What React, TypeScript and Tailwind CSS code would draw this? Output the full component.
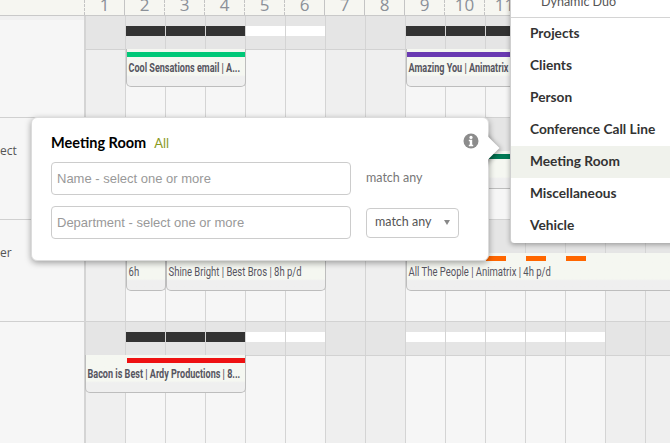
import React from "react";

const condensed = "font-['Roboto',sans-serif]";
const pt = "font-['Lato','Noto_Sans',sans-serif]";

const weekend = [0, 6, 7, 13, 14];
const days = Array.from({ length: 15 }, (_, i) => i);
const dashed = [true, false, true, true, true, true, false, false, false, true, true, true, true, true, true];

function Header() {
  return (
    <div className="flex h-[16px] border-b border-[#c9c9c9] bg-[#f6f6f1] overflow-hidden">
      <div className="w-[85px] shrink-0 border-r border-dashed border-[#c4c4c4]" />
      {days.map((d) => (
        <div
          key={d}
          className={`w-[40px] shrink-0 border-r ${dashed[d + 1] === false ? "border-solid" : "border-dashed"} border-[#c4c4c4] text-center text-[17px] leading-[10px] text-[#8b9098] font-['Open_Sans',sans-serif]`}
        >
          {d + 1}
        </div>
      ))}
    </div>
  );
}

type Bar = "k" | "w" | "p" | null;

function Card({
  left,
  width,
  label,
  bar,
  bold,
  children,
}: {
  left: number;
  width: number;
  label: string;
  bar?: string;
  bold?: boolean;
  children?: React.ReactNode;
}) {
  return (
    <div
      className="absolute top-[-1px] h-[38px] overflow-hidden rounded-b-[5px] border-b border-r border-l border-[#bdbdbd] bg-gradient-to-b from-[#f5f7f1] from-70% to-[#efefef] to-75% pt-[3px]"
      style={{ left, width }}
    >
      {bar ? <div className={`h-[5px] ${bar}`} /> : <div className="h-[5px]">{children}</div>}
      <div
        className={`mt-[4px] origin-left whitespace-nowrap pl-[2px] text-[12px] leading-[15px] text-[#55555f] ${condensed} ${bold ? "scale-x-[0.755] font-bold" : "scale-x-[0.79]"}`}
      >
        {label}
      </div>
    </div>
  );
}

function Row({
  bars,
  label,
  first,
  last,
  children,
}: {
  bars: Bar[];
  label?: string;
  first?: boolean;
  last?: boolean;
  children?: React.ReactNode;
}) {
  return (
    <div className="flex">
      <div className={`w-[84px] shrink-0 bg-[#f6f6f6] ${last ? "h-[121px]" : "h-[102px] border-b border-[#d0d0d0]"}`}>
        {first && <div className="h-[4px] bg-[#f0f0f0]" />}
        {label && (
          <div className="pt-[24px] text-[12px] leading-[18px] text-[#555] font-['Open_Sans',sans-serif]">
            {label}
          </div>
        )}
      </div>
      <div className="w-[2px] shrink-0 bg-[#d4d4d4]" />
      <div className="flex flex-col">
        <div className="flex h-[34px] border-b border-[#d2d2d2]">
          {days.map((d) => (
            <div key={d} className="h-[33px] w-[40px] shrink-0 border-r border-[#d4d4d4] bg-[#e5e5e5] pt-[10px]">
              {bars[d] === "k" && <div className="h-[10px] bg-[#333333]" />}
              {bars[d] === "w" && <div className="h-[10px] bg-white" />}
              {bars[d] === "p" && <div className="h-[10px] w-[20px] bg-[#333333]" />}
            </div>
          ))}
        </div>
        <div className={`relative flex ${last ? "h-[87px]" : "h-[68px]"}`}>
          {days.map((d) => (
            <div
              key={d}
              className={`w-[40px] shrink-0 border-r border-[#d4d4d4] ${last ? "h-[87px]" : "h-[67px]"} ${weekend.includes(d) ? "bg-[#efefef]" : "bg-[#f6f6f6]"}`}
            />
          ))}
          {!last && <div className="absolute inset-x-0 bottom-0 h-px bg-[#d2d2d2]" />}
          {children}
        </div>
      </div>
    </div>
  );
}

const n: Bar = null;

function Popover() {
  return (
    <div className="absolute left-[31px] top-[117px] h-[144px] w-[458px] rounded-[6px] border border-[#dcdcdc] bg-white shadow-[0_2px_6px_rgba(0,0,0,0.35)]">
      <div className="absolute left-full top-[12px] h-[44px] w-[24px] overflow-hidden">
        <div className="absolute -left-[15px] top-[7px] h-[22px] w-[22px] rotate-45 bg-white shadow-[2px_0_5px_rgba(0,0,0,0.35)]" />
      </div>
      <div className="relative flex flex-col pl-[19px] pt-[13px]">
        <div className="flex items-baseline gap-[8px]">
          <span className={`text-[14.5px] font-bold leading-[24px] text-black ${pt}`}>Meeting Room</span>
          <span className={`text-[13px] leading-[24px] text-[#8a9a1e] ${pt}`}>All</span>
        </div>
        <div className="mt-[7px] flex items-center">
          <div className="flex h-[33px] w-[300px] items-center rounded-[4px] border border-[#cccccc] pl-[5px] font-['Liberation_Sans',sans-serif] text-[13px] text-[#999]">
            Name - select one or more
          </div>
          <div className={`ml-[15px] text-[12.5px] text-[#777] ${pt}`}>match any</div>
        </div>
        <div className="mt-[11px] flex items-center">
          <div className="flex h-[33px] w-[300px] items-center rounded-[4px] border border-[#cccccc] pl-[5px] font-['Liberation_Sans',sans-serif] text-[13px] text-[#999]">
            Department - select one or more
          </div>
          <div className={`ml-[15px] flex h-[30px] w-[93px] items-center justify-between rounded-[4px] border border-[#cccccc] pl-[8px] pr-[8px] text-[12.5px] text-[#555] ${pt}`}>
            match any
            <svg width="6" height="5" viewBox="0 0 6 5">
              <path d="M0 0h6L3 5z" fill="#888" />
            </svg>
          </div>
        </div>
      </div>
      <svg className="absolute left-[431px] top-[15px]" width="16" height="16" viewBox="0 0 16 16">
        <circle cx="8" cy="8" r="7.5" fill="#8c8c8c" />
        <circle cx="8" cy="4.4" r="1.6" fill="#fff" />
        <path d="M5.8 6.8h3.4v5h1v1.4H5.8v-1.4h1v-3.6h-1z" fill="#fff" />
      </svg>
    </div>
  );
}

function Menu() {
  const items = ["Projects", "Clients", "Person", "Conference Call Line", "Meeting Room", "Miscellaneous", "Vehicle"];
  return (
    <div className={`absolute left-[510px] top-0 h-[243px] w-[170px] rounded-bl-[4px] border-l border-[#cfcfcf] bg-white shadow-[0_2px_5px_rgba(0,0,0,0.3)] ${pt}`}>
      <div className="flex h-[18px] border-b border-[#d4d4d4]">
        <div className="-mt-[7px] pl-[30px] text-[12.5px] leading-[18px] text-[#555]">Dynamic Duo</div>
      </div>
      {items.map((t) => (
        <div
          key={t}
          className={`flex h-[32px] items-center pb-[2px] pl-[19px] text-[13.7px] font-bold text-[#333] ${t === "Meeting Room" ? "bg-[#f0f2ec]" : ""}`}
        >
          {t}
        </div>
      ))}
    </div>
  );
}

export default function App() {
  return (
    <div className="relative h-[443px] w-[670px] overflow-hidden bg-[#f6f6f6]">
      <Header />
      <Row first bars={[n, "k", "k", "k", "w", "w", n, n, "k", "k", "k", "k", n, n, n]}>
        <Card left={40} width={120} label="Cool Sensations email | A..." bar="bg-[#00c878]" bold />
        <Card left={320} width={200} label="Amazing You | Animatrix | 8h p/d" bar="bg-[#6a3ab2]" bold />
      </Row>
      <Row label="ect" bars={[n, n, n, n, n, n, n, n, n, n, n, "k", n, n, n]}>
        <Card left={320} width={300} label="" bar="bg-[#007a55]" />
      </Row>
      <Row label="er" bars={[n, n, n, n, n, n, n, n, n, n, n, "p", n, n, n]}>
        <Card left={40} width={40} label="6h" />
        <Card left={80} width={160} label="Shine Bright | Best Bros | 8h p/d" />
        <Card left={320} width={300} label="All The People | Animatrix | 4h p/d">
          <div className="flex pl-[79px]">
            {[0, 1, 2].map((i) => (
              <div key={i} className="mr-[20px] h-[5px] w-[20px] bg-[#ff6600]" />
            ))}
          </div>
        </Card>
      </Row>
      <Row last bars={[n, "k", "k", "k", "w", "w", n, n, "w", "w", "w", "w", "w", n, n]}>
        <Card left={-1} width={161} label="Bacon is Best | Ardy Productions | 8..." bold>
          <div className="ml-[41px] h-[5px] w-[119px] bg-[#ee1111]" />
        </Card>
      </Row>
      <Popover />
      <Menu />
    </div>
  );
}
